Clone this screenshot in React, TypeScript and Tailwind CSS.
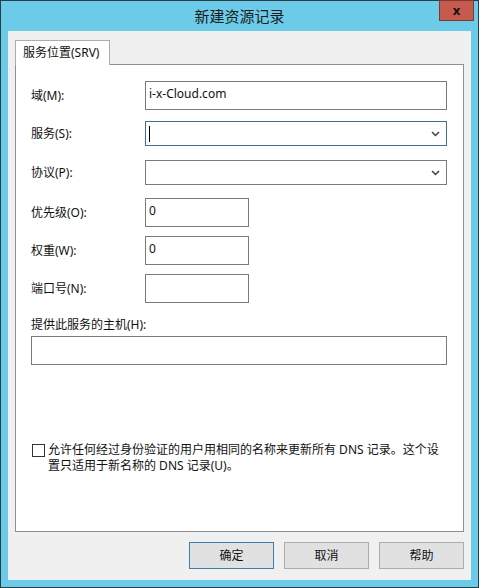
const font = "font-['Noto_Sans','Noto_Sans_CJK_SC',sans-serif]";

function Chevron() {
  return (
    <svg width="9" height="6" viewBox="0 0 9 6" className="shrink-0">
      <path d="M1 1 L4.5 4.5 L8 1" fill="none" stroke="#3f3f3f" strokeWidth="1.5" />
    </svg>
  );
}

function TextBox({ value, w, h = 'h-[29px]' }: { value?: string; w: string; h?: string }) {
  return (
    <div className={`${w} ${h} border border-[#7a7a7a] bg-white px-[3px] pt-[4px] text-[12px] leading-[16px] text-[#111]`}>
      {value}
    </div>
  );
}

function Combo({ focused }: { focused?: boolean }) {
  return (
    <div
      className={`flex h-[25px] w-[302px] items-center justify-between border bg-white pl-[3px] pr-[6px] ${
        focused ? 'border-[#3f6f93]' : 'border-[#7a7a7a]'
      }`}
    >
      <span className={`h-[16px] w-px ${focused ? 'bg-black' : 'bg-transparent'}`} />
      <Chevron />
    </div>
  );
}

function Row({ label, children, mt }: { label: string; children: React.ReactNode; mt: string }) {
  return (
    <div className={`flex items-center ${mt}`}>
      <span className="w-[114px] text-[12px] text-[#111]">{label}</span>
      {children}
    </div>
  );
}

export default function App() {
  return (
    <div className={`h-[588px] w-[479px] border border-[#2b3d48] bg-[#6ccbe9] ${font}`}>
      <div className="relative flex h-[30px] items-center justify-center">
        <span className="text-[15px] text-[#1b1b1b]">新建资源记录</span>
        <div className="absolute right-[4px] top-[-1px] flex h-[21px] w-[35px] items-center justify-center border border-[#7b3a34] bg-[#c75a4f]">
          <span className="text-[13px] font-bold leading-none text-[#111]">x</span>
        </div>
      </div>

      <div className="mx-[7px] flex h-[549px] flex-col bg-[#f0f0f0] px-[7px] pt-[9px]">
        <div className="relative z-10 -mb-px flex h-[25px] w-[95px] items-center border border-b-0 border-[#adadad] bg-white pl-[7px] text-[12px] text-[#111]">
          服务位置(SRV)
        </div>
        <div className="flex h-[468px] flex-col border border-[#8f8f95] bg-white px-[15px] pt-[16px]">
          <Row label="域(M):" mt="mt-0">
            <TextBox value="i-x-Cloud.com" w="w-[302px]" />
          </Row>
          <Row label="服务(S):" mt="mt-[11px]">
            <Combo focused />
          </Row>
          <Row label="协议(P):" mt="mt-[14px]">
            <Combo />
          </Row>
          <Row label="优先级(O):" mt="mt-[13px]">
            <TextBox value="0" w="w-[104px]" />
          </Row>
          <Row label="权重(W):" mt="mt-[9px]">
            <TextBox value="0" w="w-[104px]" />
          </Row>
          <Row label="端口号(N):" mt="mt-[9px]">
            <TextBox w="w-[104px]" />
          </Row>
          <div className="mt-[14px] text-[12px] leading-[16px] text-[#111]">提供此服务的主机(H):</div>
          <div className="mt-[3px]">
            <TextBox w="w-[416px]" />
          </div>
          <div className="mt-[77px] flex items-start gap-[3px]">
            <div className="mt-[2px] ml-px h-[13px] w-[13px] shrink-0 border border-[#333] bg-white" />
            <p className="text-[12px] leading-[16px] text-[#111]">
              允许任何经过身份验证的用户用相同的名称来更新所有 DNS 记录。这个设
              <br />
              置只适用于新名称的 DNS 记录(U)。
            </p>
          </div>
        </div>
        <div className="mt-[10px] flex justify-end gap-[10px]">
          <button className="h-[27px] w-[85px] border border-[#3c7fb1] bg-[#e1e1e1] text-[12px] text-[#111]">确定</button>
          <button className="h-[27px] w-[85px] border border-[#adadad] bg-[#e1e1e1] text-[12px] text-[#111]">取消</button>
          <button className="h-[27px] w-[85px] border border-[#adadad] bg-[#e1e1e1] text-[12px] text-[#111]">帮助</button>
        </div>
      </div>
    </div>
  );
}
